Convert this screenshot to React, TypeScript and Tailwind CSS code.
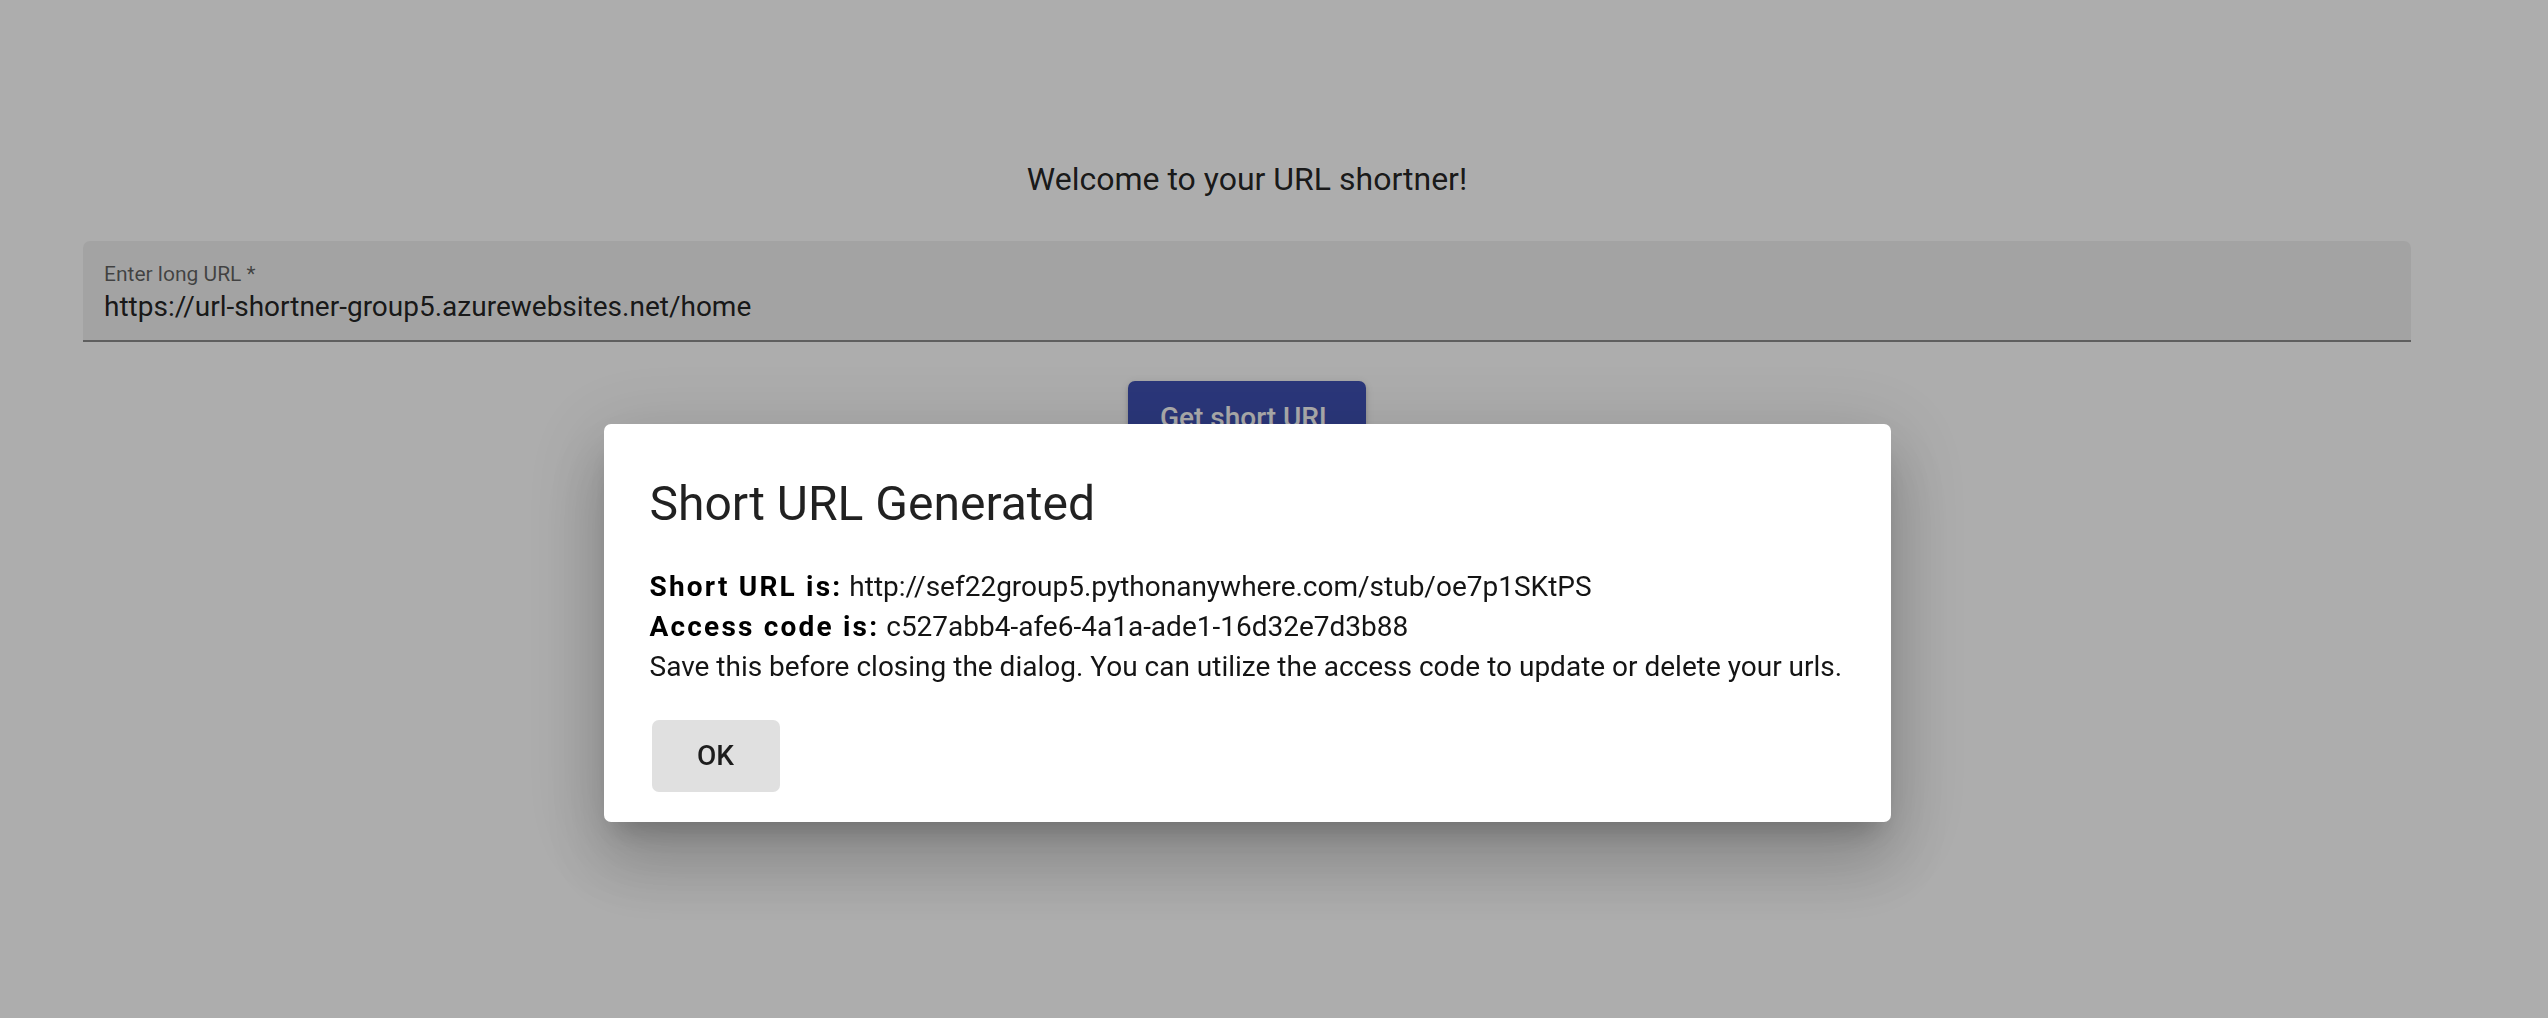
import React from 'react'

export default function App() {
  return (
    <div className="relative min-h-[1018px] w-full bg-white font-['Roboto',sans-serif] text-black">
      {/* page */}
      <div className="w-[2494px] px-[83px] pt-[155px]">
        <h1 className="text-center text-[32px] leading-[48px] font-normal text-black/[0.87]">
          Welcome to your URL shortner!
        </h1>

        {/* filled text field */}
        <div className="mt-[38px] rounded-t-[7px] border-b-2 border-black/[0.42] bg-black/[0.06] px-[21px] pt-[23px] pb-[19px]">
          <label className="block text-[21px] leading-[21px] text-black/60">Enter long URL *</label>
          <div className="mt-[8px] text-[28px] leading-[28px] text-black/[0.87]">
            https://url-shortner-group5.azurewebsites.net/home
          </div>
        </div>

        <div className="mt-[39px] flex justify-center">
          <button className="h-[73px] w-[238px] rounded-[7px] bg-[#3f51b5] text-[28px] font-medium text-white shadow-[0_5px_2px_-3px_rgba(0,0,0,0.2),0_3px_4px_0_rgba(0,0,0,0.14),0_2px_9px_0_rgba(0,0,0,0.12)]">
            Get short URL
          </button>
        </div>
      </div>

      {/* backdrop + dialog */}
      <div className="fixed inset-0 flex items-start justify-center bg-black/[0.32] pt-[424px] pr-[54px]">
        <div className="w-[1287px] rounded-[7px] bg-white px-[46px] pt-[50px] pb-[30px] shadow-[0_19px_26px_-12px_rgba(0,0,0,0.2),0_42px_66px_5px_rgba(0,0,0,0.14),0_16px_80px_14px_rgba(0,0,0,0.12)]">
          <h2 className="text-[48px] leading-[59px] font-normal text-black/[0.87]">Short URL Generated</h2>
          <div className="mt-[34px] text-[28px] leading-[40px] text-black/[0.92]">
            <p>
              <span className="font-bold tracking-[2.2px] text-black">Short URL is:</span>{' '}
              http://sef22group5.pythonanywhere.com/stub/oe7p1SKtPS
            </p>
            <p>
              <span className="font-bold tracking-[2.2px] text-black">Access code is:</span>{' '}
              c527abb4-afe6-4a1a-ade1-16d32e7d3b88
            </p>
            <p>
              Save this before closing the dialog. You can utilize the access code to update or delete your urls.
            </p>
          </div>
          <button className="mt-[33px] ml-[2px] h-[72px] w-[128px] rounded-[7px] bg-[#e0e0e0] text-[28px] font-medium text-black/[0.87]">
            OK
          </button>
        </div>
      </div>
    </div>
  )
}
